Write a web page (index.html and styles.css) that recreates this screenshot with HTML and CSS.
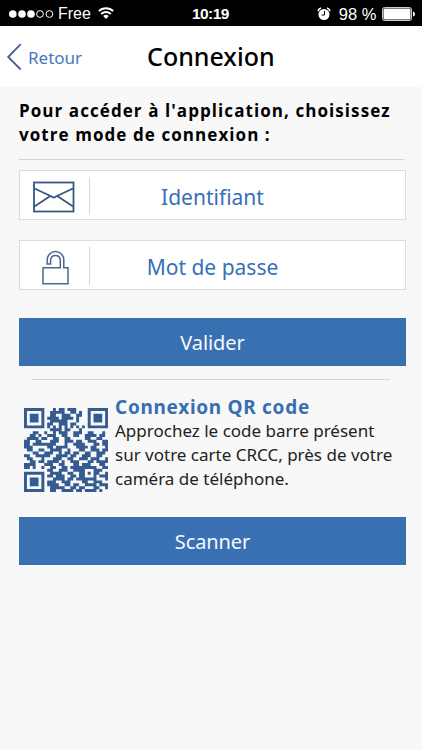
FILE: index.html
```html
<!DOCTYPE html>
<html lang="fr">
<head>
<meta charset="utf-8">
<title>Connexion</title>
<link rel="stylesheet" href="styles.css">
</head>
<body>
<div class="status">
  <svg class="signal" width="46" height="10" viewBox="0 0 46 10"><g fill="#fff"><circle cx="4.8" cy="5" r="3.8"/><circle cx="14" cy="5" r="3.8"/><circle cx="23" cy="5" r="3.8"/></g><g fill="none" stroke="#fff"><circle cx="32" cy="5" r="3.4"/><circle cx="41.4" cy="5" r="3.4"/></g></svg>
  <span class="carrier">Free</span>
  <svg class="wifi" width="16" height="12" viewBox="0 0 16 12"><g fill="none" stroke="#fff" stroke-width="1.9"><path d="M.8 4.2a10.2 10.2 0 0 1 14.4 0"/><path d="M3.2 7a6.8 6.8 0 0 1 9.6 0"/></g><path d="M5.2 9.1a4 4 0 0 1 5.6 0L8 12z" fill="#fff"/></svg>
  <span class="time">10:19</span>
  <svg class="alarm" width="14" height="14" viewBox="0 0 14 14"><circle cx="7" cy="7.5" r="5.5" fill="#fff"/><path d="M1 4.2Q1.6 1.7 4 1M10 1q2.4.7 3 3.2" stroke="#fff" stroke-width="1.5" fill="none"/><path d="M7.5 4v4H4.5" stroke="#000" fill="none"/></svg>
  <span class="percent">98 %</span>
  <svg class="battery" width="34" height="14" viewBox="0 0 34 14"><rect x=".5" y=".5" width="29" height="13" rx="2" fill="none" stroke="#ccc"/><rect x="1.5" y="1.5" width="27" height="11" rx="1" fill="#fff"/><path d="M31 4.5q2 .5 2 2.5t-2 2.5z" fill="#fff"/></svg>
</div>
<header class="nav">
  <a class="back"><svg width="16" height="28" viewBox="0 0 16 28"><path d="M14.7 1.2 2.2 14l12.5 12.5" fill="none" stroke="#46618f" stroke-width="1.8"/></svg><span>Retour</span></a>
  <h1>Connexion</h1>
</header>
<main>
  <p class="intro">Pour accéder à l'application, choisissez<br><span>votre mode de connexion :</span></p>
  <hr class="rule">
  <div class="field">
    <div class="icon"><svg width="42" height="32" viewBox="0 0 42 32" fill="none" stroke="#385784" stroke-width="1.8"><rect x="1" y="1.5" width="39.5" height="29"/><path d="M1 7.2 18 15.2Q20.7 17.7 23.5 15.2L40.5 7.2M1 25.8 17.3 15M40.5 25.8 24.2 15"/></svg></div>
    <span>Identifiant</span>
  </div>
  <div class="field">
    <div class="icon lock"><svg width="27" height="35" viewBox="0 0 27 35" fill="none" stroke="#4b678f" stroke-width="1.5"><path d="M18.3 17.7H1v16h25v-16h-4.2V9.8a8.3 8.3 0 0 0-16.6 0V14h3.4V9.8a4.9 4.9 0 0 1 9.7 0z"/></svg></div>
    <span>Mot de passe</span>
  </div>
  <div class="button">Valider</div>
  <hr class="rule short">
  <section class="qr">
    <svg class="code" width="84" height="84" viewBox="0 0 29 29"><path id="modules" fill="#355c91"/></svg>
    <div>
      <h2>Connexion QR code</h2>
      <p>Approchez le code barre présent<br>sur votre carte CRCC, près de votre<br>caméra de téléphone.</p>
    </div>
  </section>
  <div class="button">Scanner</div>
</main>
<script src="qr.js"></script>
</body>
</html>
```
FILE: styles.css
```css
* { box-sizing: border-box; }
body { margin: 0; background: #f8f8f8; font-family: "Noto Sans", sans-serif; color: #000; }
h1, h2, p { margin: 0; font-weight: 400; }
svg { display: block; flex: none; }
.status { height: 26px; display: flex; align-items: center; background: #000; color: #fff; font: 16px "Liberation Sans", sans-serif; padding: 2px 6px 0 8px; white-space: nowrap; }
.carrier { margin-left: 4px; width: 33px; }
.wifi { margin: -2px 0 0 7px; }
.time { font-weight: 700; margin-left: 78px; width: 38px; font-size: 15.5px; letter-spacing: -.55px; }
.alarm { margin-left: 88px; }
.percent { margin-left: 8px; width: 38px; font-size: 16.5px; }
.battery { margin-left: 6px; }
.nav { height: 61px; background: #fff; display: grid; grid-template-columns: 147px 1fr; align-items: center; }
.back { display: flex; align-items: center; padding: 0 0 0 6px; color: #4779ba; font-size: 17px; gap: 6px; }
.back span { padding-top: 1px; }
h1 { font-size: 25px; line-height: 34px; font-weight: 500; letter-spacing: 0; padding-bottom: 2px; }
main { padding: 12px 16px 0 19px; }
.intro { font-family: "Open Sans", "Noto Sans", sans-serif; font-size: 17px; line-height: 24px; font-weight: 700; letter-spacing: 1.07px; white-space: nowrap; }
.intro span { letter-spacing: 1.07px; }
.rule { height: 1px; border: 0; margin: 12px 2px 11px 0; background: #d5d5d5; }
.rule:not(.short) { margin-bottom: 10px; }
.field { height: 50px; margin-bottom: 20px; border: 1px solid #dcdcdc; background: #fff; display: grid; grid-template-columns: 70px 1fr; align-items: center; color: #3770b4; font-size: 21px; }
.field > span { text-align: center; padding-right: 70px; line-height: 48px; padding-top: 2px; }
.icon { height: 38px; border-right: 1px solid #d8d8d8; display: flex; align-items: center; padding: 2px 0 0 13px; }
.lock { padding-left: 22px; }
.field + .field { margin-bottom: 28px; }
.button { height: 48px; background: #3970b1; color: #f5f9ff; text-align: center; font-size: 20px; line-height: 49px; letter-spacing: -.1px; }
.rule.short { margin: 13px 16px 14px 13px; }
.qr { display: flex; height: 123px; padding-left: 5px; }
.code { margin-top: 14px; }
.qr div { margin-left: 7px; padding-top: 1px; white-space: nowrap; }
h2 { color: #376fb0; font-size: 19px; line-height: 25px; font-weight: 700; letter-spacing: .7px; }
.qr p { font-size: 17px; line-height: 24px; color: #222; margin-top: -1px; }
```
FILE: qr.js
```javascript
const rows = [
  "11111110001011011100001111111",
  "10000010011111001101001000001",
  "10111010011001110011001011101",
  "10111010111101111010001011101",
  "10111010011111100010001011101",
  "10000010110011101100001000001",
  "11111110101010101010101111111",
  "00000000011110110001000000000",
  "00011001001011100111001100010",
  "00110100111001100110011110110",
  "01111011001100110000011001100",
  "11001100011100111011001110011",
  "11011111111000100111100011011",
  "11100000110111100011110110001",
  "01100110011110010001100111011",
  "00011001110010110110011001110",
  "11001111100111101100111001100",
  "01100010001110011001110111001",
  "00110110111101001110001101111",
  "11110001110011000110111000110",
  "11010010011001101111111110011",
  "00000000110011100111100011100",
  "11111110011110011001101011001",
  "10000010110111001101100010111",
  "10111010001111011011111110001",
  "10111010111001110000110011100",
  "10111010111100110110011110111",
  "10000010011111001101100011001",
  "11111110011001111011011110100"
];
let path = "";
rows.forEach((row, y) => {
  [...row].forEach((cell, x) => {
    if (cell === "1") path += `M${x} ${y}h1.02v1.02h-1.02z`;
  });
});
document.getElementById("modules").setAttribute("d", path);
```
